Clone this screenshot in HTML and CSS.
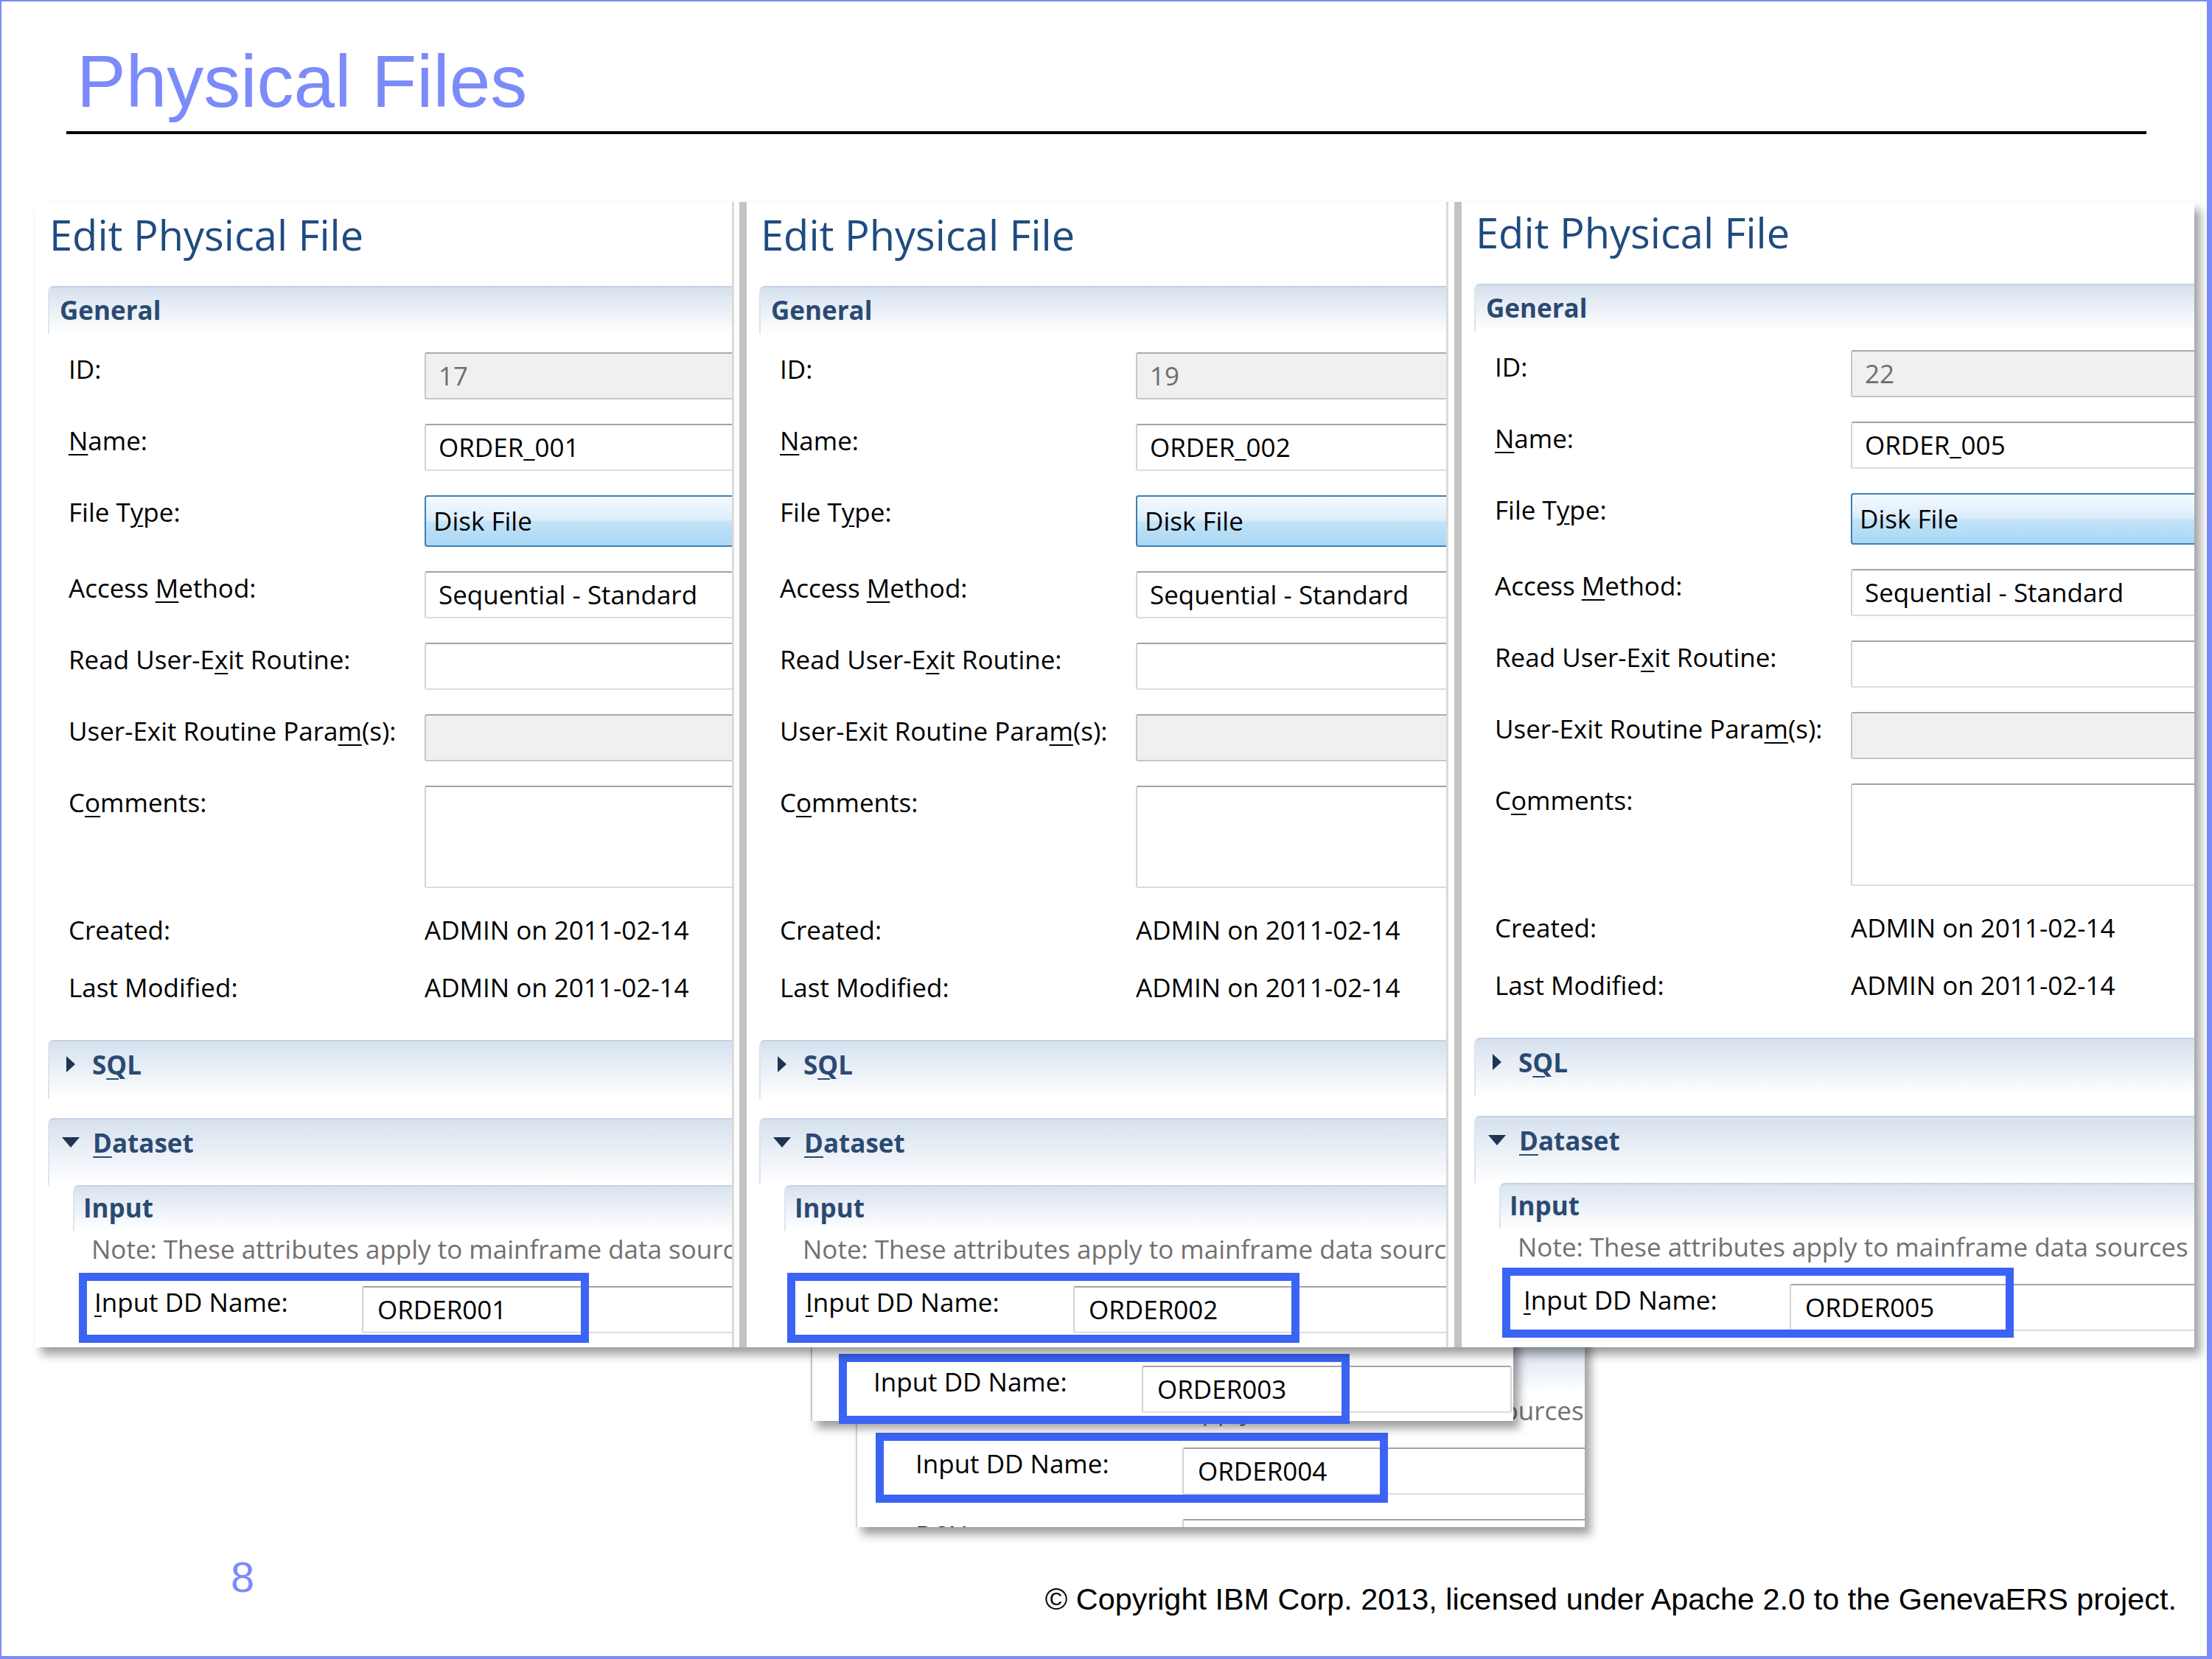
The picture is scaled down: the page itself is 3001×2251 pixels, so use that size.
FILE: index.html
```html
<!DOCTYPE html>
<html lang="en">
<head>
<meta charset="utf-8">
<title>Physical Files</title>
<link rel="stylesheet" href="styles.css">
</head>
<body>
<div class="slide">
  <header class="head">
    <h1 class="title">Physical Files</h1>
    <div class="rule"></div>
  </header>

  <div class="shots">
    <!-- panel 1 -->
    <section class="panel p1">
      <div class="ph">Edit Physical File</div>
      <div class="band"><span>General</span></div>
      <div class="form">
        <div class="lab">ID:</div><div class="fld dis">17</div>
        <div class="lab"><u>N</u>ame:</div><div class="fld">ORDER_001</div>
        <div class="lab">File T<u>y</u>pe:</div><div class="fld combo">Disk File</div>
        <div class="lab">Access <u>M</u>ethod:</div><div class="fld">Sequential - Standard</div>
        <div class="lab">Read User-E<u>x</u>it Routine:</div><div class="fld"></div>
        <div class="lab">User-Exit Routine Para<u>m</u>(s):</div><div class="fld dis"></div>
        <div class="lab">C<u>o</u>mments:</div><div class="fld area"></div>
      </div>
      <div class="meta">
        <div>Created:</div><div>ADMIN on 2011-02-14</div>
        <div>Last Modified:</div><div>ADMIN on 2011-02-14</div>
      </div>
      <div class="band sec"><svg class="tri-r" width="12" height="22" viewBox="0 0 12 22"><polygon points="0,0 12,11 0,22"/></svg><span class="st">S<u>Q</u>L</span></div>
      <div class="band ds"><svg class="tri-d" width="24" height="14" viewBox="0 0 24 14"><polygon points="0,0 24,0 12,14"/></svg><span class="st"><u>D</u>ataset</span></div>
      <div class="sub">Input</div>
      <div class="note">Note: These attributes apply to mainframe data sources</div>
      <div class="dd">
        <div class="ddl"><u>I</u>nput DD Name:</div><div class="fld ddf">ORDER001</div>
        <div class="hl hl1"></div>
      </div>
    </section>

    <!-- panel 2 -->
    <section class="panel p2">
      <div class="ph">Edit Physical File</div>
      <div class="band"><span>General</span></div>
      <div class="form">
        <div class="lab">ID:</div><div class="fld dis">19</div>
        <div class="lab"><u>N</u>ame:</div><div class="fld">ORDER_002</div>
        <div class="lab">File T<u>y</u>pe:</div><div class="fld combo">Disk File</div>
        <div class="lab">Access <u>M</u>ethod:</div><div class="fld">Sequential - Standard</div>
        <div class="lab">Read User-E<u>x</u>it Routine:</div><div class="fld"></div>
        <div class="lab">User-Exit Routine Para<u>m</u>(s):</div><div class="fld dis"></div>
        <div class="lab">C<u>o</u>mments:</div><div class="fld area"></div>
      </div>
      <div class="meta">
        <div>Created:</div><div>ADMIN on 2011-02-14</div>
        <div>Last Modified:</div><div>ADMIN on 2011-02-14</div>
      </div>
      <div class="band sec"><svg class="tri-r" width="12" height="22" viewBox="0 0 12 22"><polygon points="0,0 12,11 0,22"/></svg><span class="st">S<u>Q</u>L</span></div>
      <div class="band ds"><svg class="tri-d" width="24" height="14" viewBox="0 0 24 14"><polygon points="0,0 24,0 12,14"/></svg><span class="st"><u>D</u>ataset</span></div>
      <div class="sub">Input</div>
      <div class="note">Note: These attributes apply to mainframe data sources</div>
      <div class="dd">
        <div class="ddl"><u>I</u>nput DD Name:</div><div class="fld ddf">ORDER002</div>
        <div class="hl hl2"></div>
      </div>
    </section>

    <!-- panel 3 -->
    <section class="panel p3">
      <div class="ph">Edit Physical File</div>
      <div class="band"><span>General</span></div>
      <div class="form">
        <div class="lab">ID:</div><div class="fld dis">22</div>
        <div class="lab"><u>N</u>ame:</div><div class="fld">ORDER_005</div>
        <div class="lab">File T<u>y</u>pe:</div><div class="fld combo">Disk File</div>
        <div class="lab">Access <u>M</u>ethod:</div><div class="fld">Sequential - Standard</div>
        <div class="lab">Read User-E<u>x</u>it Routine:</div><div class="fld"></div>
        <div class="lab">User-Exit Routine Para<u>m</u>(s):</div><div class="fld dis"></div>
        <div class="lab">C<u>o</u>mments:</div><div class="fld area"></div>
      </div>
      <div class="meta">
        <div>Created:</div><div>ADMIN on 2011-02-14</div>
        <div>Last Modified:</div><div>ADMIN on 2011-02-14</div>
      </div>
      <div class="band sec"><svg class="tri-r" width="12" height="22" viewBox="0 0 12 22"><polygon points="0,0 12,11 0,22"/></svg><span class="st">S<u>Q</u>L</span></div>
      <div class="band ds"><svg class="tri-d" width="24" height="14" viewBox="0 0 24 14"><polygon points="0,0 24,0 12,14"/></svg><span class="st"><u>D</u>ataset</span></div>
      <div class="sub">Input</div>
      <div class="note">Note: These attributes apply to mainframe data sources</div>
      <div class="dd">
        <div class="ddl"><u>I</u>nput DD Name:</div><div class="fld ddf">ORDER005</div>
        <div class="hl hl3"></div>
      </div>
    </section>
  </div>

  <!-- stacked crops below -->
  <div class="win w4">
    <div class="dd">
      <div class="ddl">Input DD Name:</div><div class="fld ddf">ORDER003</div>
      <div class="hl hl4"></div>
    </div>
  </div>
  <div class="win w5">
    <div class="sub">Input</div>
    <div class="note">Note: These attributes apply to mainframe data sources</div>
    <div class="dd">
      <div class="ddl">Input DD Name:</div><div class="fld ddf">ORDER004</div>
      <div class="hl hl5"></div>
    </div>
    <div class="dd next">
      <div class="ddl">DSN:</div><div class="fld ddf"></div>
    </div>
  </div>

  <footer class="foot">
    <div class="pg">8</div>
    <div class="copy">© Copyright IBM Corp. 2013, licensed under Apache 2.0 to the GenevaERS project.</div>
  </footer>
</div>
</body>
</html>
```
FILE: styles.css
```css
* { box-sizing: border-box; margin: 0; padding: 0; }
html, body { width: 3001px; height: 2251px; overflow: hidden; background: #fff; }
body { font-family: "Open Sans", "Noto Sans", sans-serif; color: #000; }

.slide {
  position: relative;
  width: 3001px;
  height: 2251px;
  border-style: solid;
  border-color: #7b8bf9;
  border-width: 2px 7px 4px 2px;
  background: #fff;
}

/* header */
.head { padding-top: 58px; }
.title {
  margin-left: 102px;
  font: 400 100px/100px "Liberation Sans", Arial, sans-serif;
  color: #7b8bf9;
  white-space: nowrap;
}
.rule { margin: 18px 0 0 88px; width: 2822px; height: 4px; background: #000; }

/* screenshot row */
.shots {
  position: relative;
  z-index: 3;
  display: flex;
  margin: 92px 0 0 46px;
  width: 2929px;
  height: 1554px;
  background: #fff;
  box-shadow: 8px 10px 12px rgba(0, 0, 0, .38);
}
.panel {
  position: relative;
  flex: none;
  height: 100%;
  background: #fff;
  overflow: hidden;
  font-size: 35px;
  line-height: 35px;
}
.p1 { width: 948px; border-right: 3px solid #dadada; }
.p2 { width: 962px; margin-left: 7px; border-left: 10px solid #c3c3c3; border-right: 3px solid #dadada; }
.p3 { width: 1004px; margin-left: 8px; border-left: 10px solid #c3c3c3; }

u { text-decoration-thickness: 2px; text-underline-offset: 5px; }

.ph {
  margin: 16px 0 0 19px;
  font-size: 56px;
  line-height: 56px;
  color: #1f4b80;
  white-space: nowrap;
}
.p3 .ph { margin-top: 13px; }

.band {
  display: flex;
  align-items: flex-start;
  margin: 42px 0 0 17px;
  height: 65px;
  padding: 0 0 0 14px;
  border-top: 2px solid #c3d2e3;
  border-left: 2px solid #dde5ee;
  border-top-left-radius: 8px;
  background: linear-gradient(#d6e1ee, #ffffff);
  font-weight: 700;
  color: #2b4a72;
  white-space: nowrap;
}
.band > span { display: block; line-height: 35px; margin-top: 13px; }

.form {
  display: grid;
  grid-template-columns: 483px 600px;
  row-gap: 33px;
  margin: 25px 0 0 45px;
}
.lab { margin-top: 5px; white-space: nowrap; }
.fld {
  height: 64px;
  border: 2px solid;
  border-color: #a3a3a3 #d2d2d2 #dcdcdc #d2d2d2;
  border-radius: 3px;
  padding-left: 17px;
  line-height: 60px;
  white-space: nowrap;
  background: #fff;
}
.fld.dis {
  background: #f0f0f0;
  color: #6d6d6d;
  border-color: #a9a9a9 #c6c6c6 #c6c6c6 #c6c6c6;
}
.fld.combo {
  height: 70px;
  line-height: 66px;
  padding-left: 10px;
  border-color: #3c7fb1;
  border-radius: 4px;
  background: linear-gradient(#f4faff, #dcedfb 48%, #c3e3f8 52%, #a9d7f5);
}
.fld.area { height: 139px; }

.meta {
  display: grid;
  grid-template-columns: 483px auto;
  row-gap: 43px;
  margin: 39px 0 0 45px;
  white-space: nowrap;
}

.band.sec { margin-top: 54px; height: 80px; padding-left: 23px; }
.band.ds { margin-top: 26px; height: 91px; padding-left: 17px; }
.band .st { display: block; margin-top: 14px; line-height: 35px; }
.tri-r { flex: none; fill: #1f3450; margin-top: 20px; }
.tri-d { flex: none; fill: #1f3450; margin-top: 24px; }
.band.sec .st { margin-left: 23px; }
.band.ds .st { margin-left: 18px; }

.sub {
  margin-left: 51px;
  height: 62px;
  padding: 11px 0 0 12px;
  border-top: 2px solid #c3d2e3;
  border-left: 2px solid #dde5ee;
  border-top-left-radius: 8px;
  background: linear-gradient(#d9e3ef, #ffffff);
  font-weight: 700;
  color: #2b4a72;
  line-height: 35px;
}
.note {
  margin: 7px 0 0 76px;
  color: #74706f;
  white-space: nowrap;
}
.dd {
  position: relative;
  display: flex;
  margin-top: 33px;
  height: 64px;
}
.ddl { flex: none; width: 363px; margin: 4px 0 0 80px; white-space: nowrap; }
.fld.ddf { flex: none; width: 600px; padding-left: 19px; }
.p3 .ddl { margin-left: 84px; }
.p3 .fld.ddf { margin-left: -2px; }

.hl {
  position: absolute;
  top: -18px;
  height: 95px;
  border: 11px solid #3b63f4;
}
.hl1 { left: 59px; width: 692px; }
.hl2 { left: 55px; width: 695px; }
.hl3 { left: 55px; width: 694px; top: -22px; }

/* windows stacked under the row */
.win {
  position: absolute;
  background: #fff;
  font-size: 35px;
  line-height: 35px;
  box-shadow: 8px 10px 12px rgba(0, 0, 0, .38);
}
.w4 {
  left: 1098px;
  top: 1778px;
  width: 953px;
  height: 148px;
  z-index: 2;
  border-left: 2px solid #c4c4c4;
  padding-top: 73px;
}
.w4 .dd { margin-top: 0; }
.w4 .ddl { margin-left: 83px; width: 364px; }
.w4 .fld.ddf { width: 502px; }
.hl4 { left: 36px; width: 693px; top: -16px; }

.w5 {
  left: 1159px;
  top: 1778px;
  width: 989px;
  height: 292px;
  z-index: 1;
  overflow: hidden;
  border-left: 2px solid #d4d4d4;
  padding-top: 47px;
}
.w5 .ddl { margin-left: 79px; width: 362px; }
.hl5 { left: 25px; width: 695px; top: -20px; }

/* footer */
.foot { display: flex; align-items: flex-start; margin-top: 283px; }
.pg {
  margin-left: 311px;
  font: 400 58px/58px "Liberation Sans", Arial, sans-serif;
  color: #7b8bf9;
}
.copy {
  margin-left: auto;
  margin-right: 41px;
  margin-top: 38px;
  font: 400 41.4px/42px "Liberation Sans", Arial, sans-serif;
  color: #000;
  white-space: nowrap;
}
```
